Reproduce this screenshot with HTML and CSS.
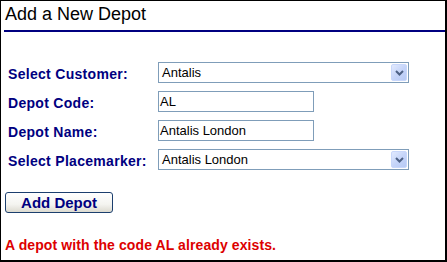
FILE: index.html
```html
<!DOCTYPE html>
<html>
<head>
<meta charset="utf-8">
<link rel="stylesheet" href="styles.css">
</head>
<body>
<div class="frame">
  <div class="title">Add a New Depot</div>
  <div class="form">
    <div class="label">Select Customer:</div>
    <div class="select wide">
      <span class="value">Antalis</span>
      <span class="drop"><svg width="9" height="6" viewBox="0 0 9 6"><path d="M1 1 L4.5 4.5 L8 1" fill="none" stroke="#4d6185" stroke-width="2"/></svg></span>
    </div>
    <div class="label">Depot Code:</div>
    <div class="input"><span class="value">AL</span></div>
    <div class="label">Depot Name:</div>
    <div class="input"><span class="value">Antalis London</span></div>
    <div class="label">Select Placemarker:</div>
    <div class="select wide">
      <span class="value">Antalis London</span>
      <span class="drop"><svg width="9" height="6" viewBox="0 0 9 6"><path d="M1 1 L4.5 4.5 L8 1" fill="none" stroke="#4d6185" stroke-width="2"/></svg></span>
    </div>
  </div>
  <div class="actions"><button class="btn">Add Depot</button></div>
  <div class="error">A depot with the code AL already exists.</div>
</div>
</body>
</html>
```
FILE: styles.css
```css
html, body {
  margin: 0;
  padding: 0;
  background: #fff;
}
.frame {
  width: 447px;
  height: 262px;
  box-sizing: border-box;
  border-top: 1px solid #000;
  border-left: 1px solid #000;
  border-right: 2px solid #000;
  border-bottom: 2px solid #000;
  font-family: "Liberation Sans", Arial, sans-serif;
  overflow: hidden;
}
.title {
  margin-left: 3px;
  padding-left: 1px;
  padding-top: 2px;
  height: 27px;
  font-size: 18px;
  line-height: 22px;
  color: #000;
  border-bottom: 2px solid #000080;
}
.form {
  margin-top: 30px;
  padding-left: 7px;
  display: grid;
  grid-template-columns: 150px auto;
  grid-auto-rows: 21px;
  row-gap: 8px;
  align-items: center;
}
.label {
  font-size: 14px;
  font-weight: bold;
  letter-spacing: 0.3px;
  color: #000080;
  line-height: 16px;
  padding-top: 2px;
  white-space: nowrap;
}
.select, .input {
  box-sizing: border-box;
  height: 21px;
  border: 1px solid #7f9db9;
  background: #fff;
  display: flex;
  align-items: center;
  font-size: 13px;
  color: #000;
}
.select {
  width: 251px;
  padding: 1px;
  justify-content: space-between;
}
.select .value {
  padding-left: 2px;
}
.input {
  width: 156px;
  padding-left: 1px;
}
.drop {
  box-sizing: border-box;
  width: 16px;
  height: 17px;
  border: 1px solid #c8d7fb;
  border-radius: 2px;
  background: linear-gradient(135deg, #e2eafe 0%, #c6d5f9 50%, #b7caf5 100%);
  display: flex;
  align-items: center;
  justify-content: center;
}
.actions {
  margin-top: 22px;
  padding-left: 4px;
}
.btn {
  box-sizing: border-box;
  width: 108px;
  height: 21px;
  margin: 0;
  padding: 0;
  border: 1px solid #1c3f6e;
  border-radius: 3px;
  background: linear-gradient(#ffffff 0%, #f4f4f0 60%, #dcdad0 100%);
  font-family: "Liberation Sans", Arial, sans-serif;
  font-size: 15px;
  font-weight: bold;
  color: #000080;
  line-height: 17px;
}
.error {
  margin-top: 24px;
  padding-left: 4px;
  font-size: 14px;
  font-weight: bold;
  line-height: 16px;
  letter-spacing: 0.1px;
  color: #dd0000;
}
```
